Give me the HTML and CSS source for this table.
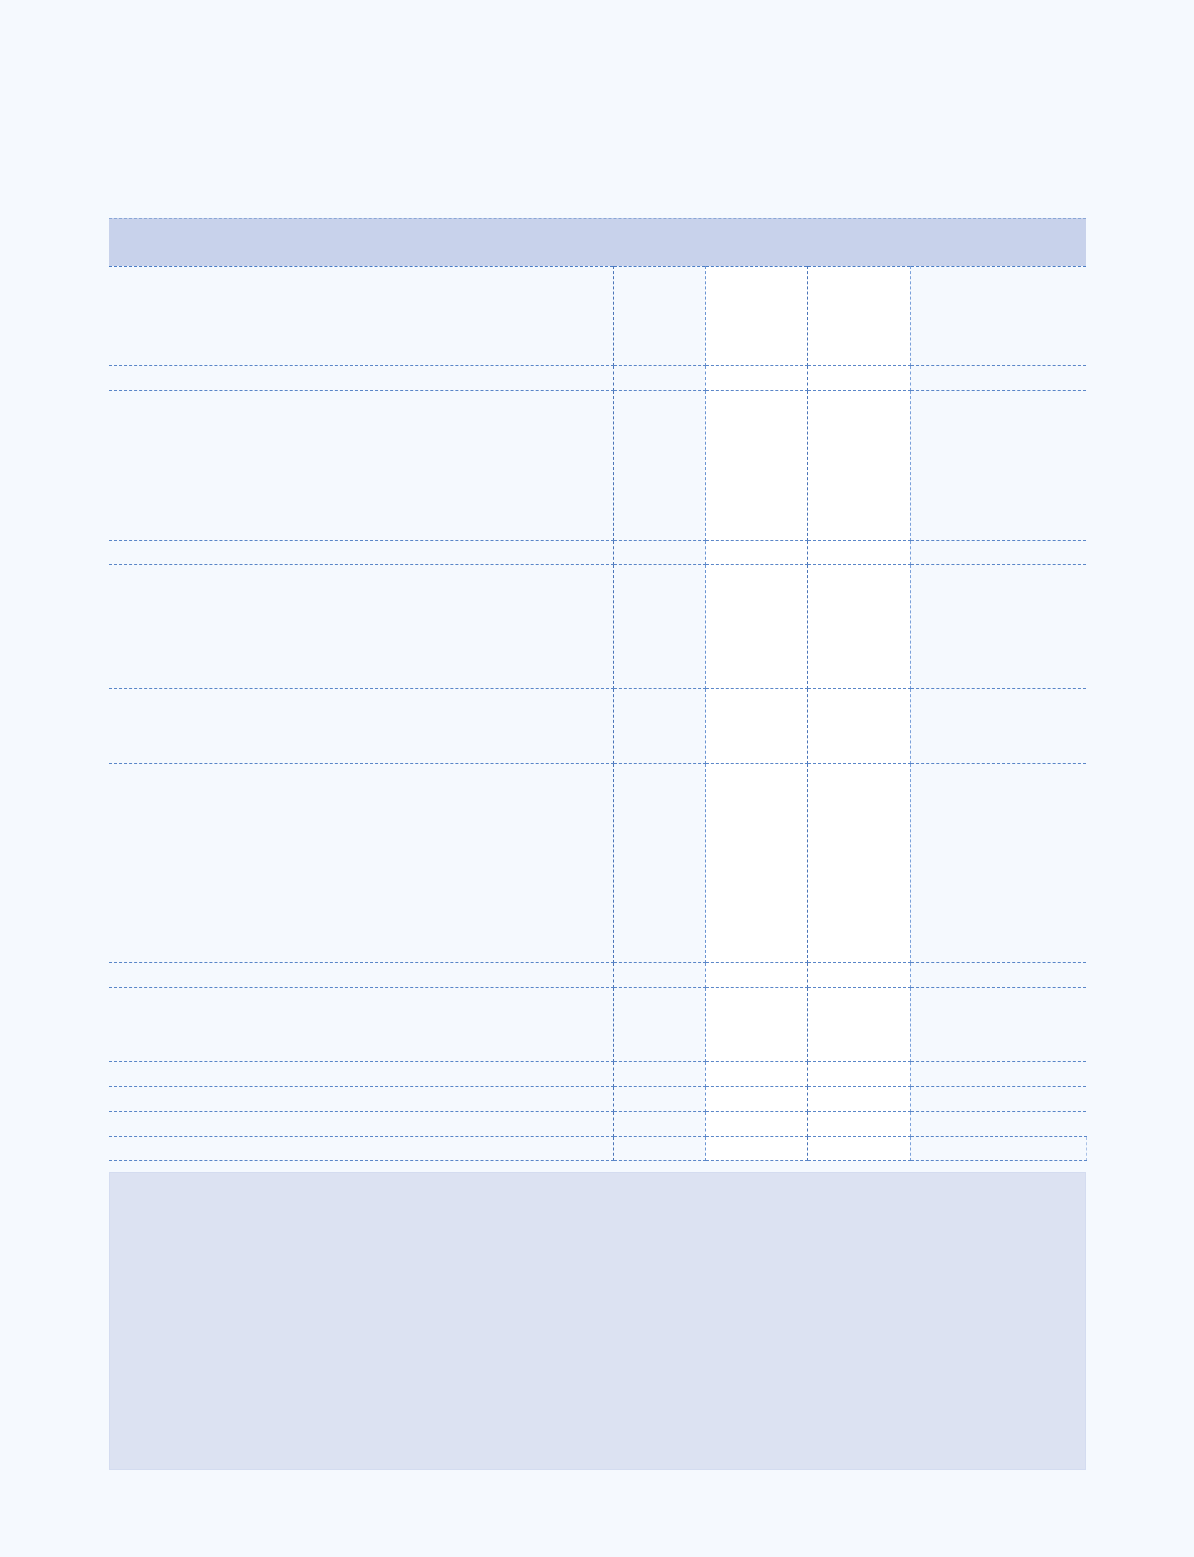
FILE: index.html
```html
<!DOCTYPE html>
<html>
<head>
<meta charset="utf-8">
<link rel="stylesheet" href="styles.css">
</head>
<body>
<main class="page">
  <div class="table-head"></div>
  <table class="grid">
    <colgroup>
      <col class="c1"><col class="c2"><col class="c3"><col class="c4"><col class="c5">
    </colgroup>
    <tbody>
      <tr class="h99"><td></td><td></td><td class="w"></td><td class="w"></td><td></td></tr>
      <tr class="h25"><td></td><td></td><td class="w"></td><td class="w"></td><td></td></tr>
      <tr class="h150"><td></td><td></td><td class="w"></td><td class="w"></td><td></td></tr>
      <tr class="h24"><td></td><td></td><td class="w"></td><td class="w"></td><td></td></tr>
      <tr class="h124"><td></td><td></td><td class="w"></td><td class="w"></td><td></td></tr>
      <tr class="h75"><td></td><td></td><td class="w"></td><td class="w"></td><td></td></tr>
      <tr class="h199"><td></td><td></td><td class="w"></td><td class="w"></td><td></td></tr>
      <tr class="h25"><td></td><td></td><td class="w"></td><td class="w"></td><td></td></tr>
      <tr class="h74"><td></td><td></td><td class="w"></td><td class="w"></td><td></td></tr>
      <tr class="h25"><td></td><td></td><td class="w"></td><td class="w"></td><td></td></tr>
      <tr class="h25"><td></td><td></td><td class="w"></td><td class="w"></td><td></td></tr>
      <tr class="h25"><td></td><td></td><td class="w"></td><td class="w"></td><td></td></tr>
      <tr class="h24 last"><td></td><td></td><td class="w"></td><td class="w"></td><td></td></tr>
    </tbody>
  </table>
  <div class="footer-box"></div>
</main>
</body>
</html>
```
FILE: styles.css
```css
html, body {
  margin: 0;
  padding: 0;
  background: #f5f9fe;
  font-family: "Liberation Sans", Arial, sans-serif;
}
.page {
  width: 977px;
  margin: 0 auto;
  padding-top: 218px;
  padding-left: 1px;
  padding-bottom: 87px;
}
.table-head {
  height: 47px;
  background: #c8d2eb;
  border-top: 1px dashed #8aa6d6;
}
.grid {
  width: 977px;
  border-collapse: collapse;
  table-layout: fixed;
  border-top: 1px dashed #4a7cc6;
}
.c1 { width: 504px; }
.c2 { width: 92px; }
.c3 { width: 102px; }
.c4 { width: 103px; }
.c5 { width: 176px; }
.grid td {
  padding: 0;
  border-bottom: 1px dashed #5a86c8;
  border-right: 1px dashed #4a74b8;
}
.grid td:nth-child(2) { border-right-color: #6a94d2; }
.grid td:nth-child(4) { border-right-color: #7aa0da; }
.grid td:last-child { border-right: none; }
.grid tr.last td:last-child { border-right: 1px dashed #a8c0e6; }
.grid td.w { background: #ffffff; }
.h24 { height: 24px; }
.h25 { height: 25px; }
.h74 { height: 74px; }
.h75 { height: 75px; }
.h99 { height: 99px; }
.h124 { height: 124px; }
.h150 { height: 150px; }
.h199 { height: 199px; }
.footer-box {
  margin-top: 11px;
  height: 296px;
  background: #dce2f2;
  border: 1px solid #d4dcf0;
}
```
